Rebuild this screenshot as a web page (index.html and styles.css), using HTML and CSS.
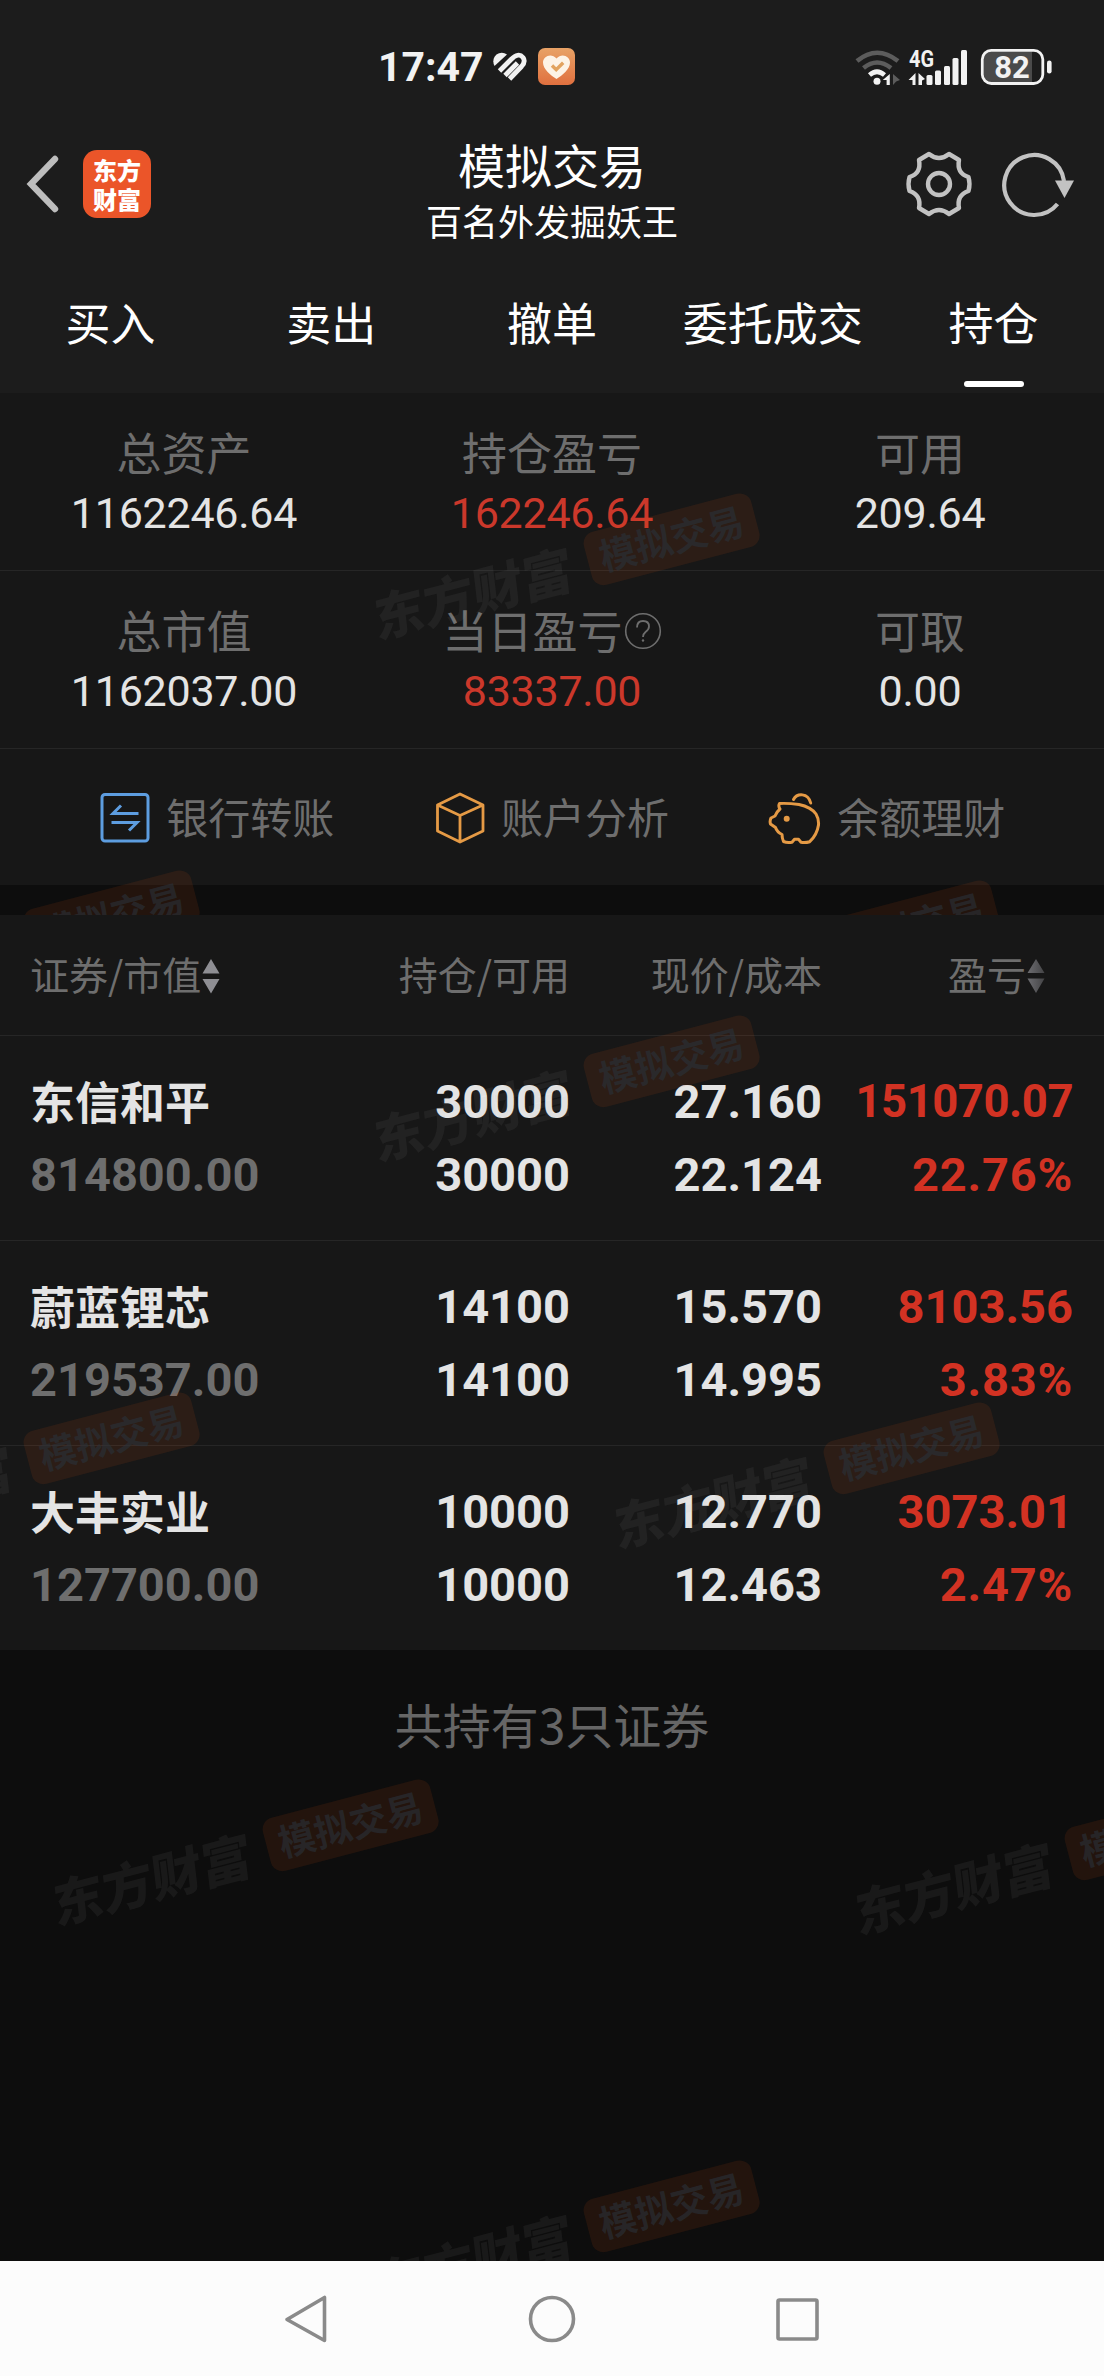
FILE: index.html
```html
<!DOCTYPE html>
<html lang="zh-CN">
<head>
<meta charset="utf-8">
<title>模拟交易</title>
<link rel="stylesheet" href="styles.css">
</head>
<body>
<div class="screen">
  <header class="top">
    <div class="status">
      <div class="status-left">
        <span class="clock">17:47</span>
        <svg class="health" width="34" height="30" viewBox="0 0 34 30">
          <g fill="none" stroke="#f2f2f2" stroke-width="4.800">
            <path d="M6.500 19 18 7.500Q25.500 0 30 5.500Q33 9.500 28.500 14.500L16.500 27"/>
            <path d="M12 23.500 24.500 11"/>
          </g>
          <path d="M1.500 14C-1 9 .5 3 6 1.200Q10.500 0 14 2.500Z" fill="#f2f2f2"/>
        </svg>
        <svg class="heart" width="38" height="38" viewBox="0 0 38 38">
          <defs><linearGradient id="hg" x1="0" y1="0" x2="0" y2="1"><stop offset="0" stop-color="#e8a266"/><stop offset="1" stop-color="#e0703f"/></linearGradient></defs>
          <rect width="37" height="37" rx="7" fill="url(#hg)"/>
          <path d="M18.500 31C13 27.500 5 21.500 5 14.500C5 8 13.500 4.500 18.500 10.500C23.500 4.500 32 8 32 14.500C32 21.500 24 27.500 18.500 31Z" fill="#fdf3e6"/>
          <path d="M14 17.500l4.200 4.200 7-7" fill="none" stroke="#e2a35f" stroke-width="3.400"/>
        </svg>
      </div>
      <svg class="status-right" width="200" height="40" viewBox="24 16 200 40">
        <g fill="none" stroke="#5c5c5c" stroke-width="4.600">
          <path d="M27 30Q47 13.500 68 30"/>
          <path d="M33.500 37Q47 26 61 37"/>
          <path d="M39.500 44Q47 37.500 54.500 44" stroke="#f2f2f2"/>
        </g>
        <circle cx="47" cy="50.300" r="3.500" fill="#f2f2f2"/>
        <path d="M59.800 43v11h-3.200v-5h-3.800z" fill="#f2f2f2"/>
        <path d="M63 43l7 6-3.800 1.500-3.200 3.500z" fill="#5c5c5c"/>
        <text class="net" x="79" y="36" textLength="25" lengthAdjust="spacingAndGlyphs">4G</text>
        <g fill="#f2f2f2">
          <path d="M85.500 42v12h-3v-5h-4zM88.500 42l6.500 6-3 1.500v4.500h-3.500z"/>
          <rect x="96.500" y="44" width="6" height="10" rx="1.500"/>
          <rect x="105" y="39.500" width="6" height="14.500" rx="1.500"/>
          <rect x="114" y="35" width="6" height="19" rx="1.500"/>
          <rect x="122.500" y="27" width="6" height="27" rx="1.500"/>
          <rect x="131" y="19" width="6" height="35" rx="1.500"/>
          <rect x="217" y="29.500" width="4.600" height="13" rx="2.300"/>
        </g>
        <path d="M162 20.500H202V52H162Q154 52 154 44V28Q154 20.500 162 20.500Z" fill="#4a4a4a"/>
        <rect x="152.300" y="19.300" width="60.500" height="33.200" rx="9" fill="none" stroke="#f2f2f2" stroke-width="2.800"/>
        <text class="bat" x="182" y="46.800" text-anchor="middle">82</text>
      </svg>
    </div>
    <div class="titlebar">
      <div class="title-left">
        <svg width="34" height="58" viewBox="0 0 34 58"><path d="M30 4 6 29 30 54" fill="none" stroke="#bdbdbd" stroke-width="6.400" stroke-linecap="round"/></svg>
        <div class="logo"><span>东方</span><span>财富</span></div>
      </div>
      <div class="titles">
        <h1>模拟交易</h1>
        <p>百名外发掘妖王</p>
      </div>
      <div class="title-right">
        <svg width="68" height="68" viewBox="0 0 68 68" fill="none" stroke="#c2c2c2" stroke-width="4.400" stroke-linejoin="round">
          <path d="M24 4Q34 12 44 4L54 10Q51.500 23.500 63.500 27Q65.500 34 63.500 41Q51.500 45 54 58L44 64Q34 56 24 64L14 58Q16.500 45 4.500 41Q2.500 34 4.500 27Q16.500 23.500 14 10Z"/>
          <circle cx="34" cy="34" r="11"/>
        </svg>
        <svg width="72" height="68" viewBox="0 0 72 68">
          <path d="M55.500 54A30 30 0 1 1 62 31" fill="none" stroke="#c2c2c2" stroke-width="4.200"/>
          <path d="M53 30.500H72L62.500 48Z" fill="#c2c2c2"/>
        </svg>
      </div>
    </div>
    <nav class="tabs">
      <a>买入</a><a>卖出</a><a>撤单</a><a>委托成交</a><a class="active">持仓</a>
    </nav>
  </header>

  <section class="overview">
    <div class="figures">
      <div class="figure"><span class="label">总资产</span><span class="num">1162246.64</span></div>
      <div class="figure"><span class="label">持仓盈亏</span><span class="num up">162246.64</span></div>
      <div class="figure"><span class="label">可用</span><span class="num">209.64</span></div>
    </div>
    <div class="figures">
      <div class="figure"><span class="label">总市值</span><span class="num">1162037.00</span></div>
      <div class="figure"><span class="label">当日盈亏<svg width="38" height="38" viewBox="0 0 38 38" fill="none" stroke="#6e6e6e"><circle cx="19" cy="19" r="17.300" stroke-width="1.600"/><path d="M13 15.500Q13 9 19 9Q25 9 25 14.500Q25 17.500 21.500 20Q19 22 19 25" stroke-width="1.800"/><circle cx="19" cy="28.500" r="1.200" fill="#6e6e6e" stroke="none"/></svg></span><span class="num up">83337.00</span></div>
      <div class="figure"><span class="label">可取</span><span class="num">0.00</span></div>
    </div>
    <div class="actions">
      <a>
        <svg width="50" height="52" viewBox="0 0 50 52" fill="none" stroke="#5d9de0" stroke-width="3"><rect x="2" y="2.500" width="46" height="46.500" rx="3"/><path d="M38.500 21.500H13L21 13.500M11.500 30.500H37L29 38.500"/></svg>
        银行转账
      </a>
      <a>
        <svg width="50" height="52" viewBox="0 0 50 52" fill="none" stroke="#e59a45" stroke-width="2.800" stroke-linejoin="round"><path d="M25 2 48 13V39L25 50 2.500 39V13ZM2.500 13 25 23.500 48 13M25 23.500V50"/></svg>
        账户分析
      </a>
      <a>
        <svg width="53" height="53" viewBox="0 0 53 53" fill="none" stroke="#e59a45" stroke-width="3" stroke-linejoin="round" stroke-linecap="round"><path d="M25.500 7.500C29 1 40 .5 42.700 11"/><path d="M11.500 11.500Q20 11 31 12.500Q43 15 48 22Q51 27 50.500 33Q49 43 41.700 49.700Q37 51 33 50.200L30.500 47.300H26.500L24 50.200Q19 51 15.500 49.500Q14 46 14 42.500Q9 40 7.500 35.500L2.500 32Q1.500 29 3 26L7 24Q8.500 20 12 17Q10 14 11.500 11.500Z"/><circle cx="18.700" cy="26.700" r="3" fill="#e59a45" stroke="none"/></svg>
        余额理财
      </a>
    </div>
    <div class="marks">
      <div class="mark m1"><b>东方财富</b><i>模拟交易</i></div>
      <div class="mark m2"><b>东方财富</b><i>模拟交易</i></div>
      <div class="mark m3"><b>东方财富</b><i>模拟交易</i></div>
    </div>
  </section>

  <section class="holdings">
    <div class="table">
      <div class="row head">
        <span>证券/市值<svg width="18" height="36" viewBox="0 0 18 36" fill="#8e8e93"><path d="M9 1 17.500 15.500H.5ZM.5 21H17.500L9 35.500Z"/></svg></span>
        <span>持仓/可用</span>
        <span>现价/成本</span>
        <span>盈亏<svg width="18" height="36" viewBox="0 0 18 36"><defs><linearGradient id="fade" x1="0" x2="1"><stop offset="0" stop-color="#6c6c70"/><stop offset="1" stop-color="#444446"/></linearGradient></defs><path d="M9 1 17.500 15H.5ZM.5 20.500H17.500L9 35Z" fill="url(#fade)"/></svg></span>
      </div>
      <div class="row">
        <div><strong>东信和平</strong><span class="dim">814800.00</span></div>
        <div><span>30000</span><span>30000</span></div>
        <div><span>27.160</span><span>22.124</span></div>
        <div class="gain"><span class="long">151070.07</span><span class="pct">22.76%</span></div>
      </div>
      <div class="row">
        <div><strong>蔚蓝锂芯</strong><span class="dim">219537.00</span></div>
        <div><span>14100</span><span>14100</span></div>
        <div><span>15.570</span><span>14.995</span></div>
        <div class="gain"><span>8103.56</span><span class="pct">3.83%</span></div>
      </div>
      <div class="row">
        <div><strong>大丰实业</strong><span class="dim">127700.00</span></div>
        <div><span>10000</span><span>10000</span></div>
        <div><span>12.770</span><span>12.463</span></div>
        <div class="gain"><span>3073.01</span><span class="pct">2.47%</span></div>
      </div>
    </div>
    <p class="count">共持有3只证券</p>
    <div class="marks">
      <div class="mark m1"><b>东方财富</b><i>模拟交易</i></div>
      <div class="mark m2"><b>东方财富</b><i>模拟交易</i></div>
      <div class="mark m3"><b>东方财富</b><i>模拟交易</i></div>
      <div class="mark m4"><b>东方财富</b><i>模拟交易</i></div>
      <div class="mark m5"><b>东方财富</b><i>模拟交易</i></div>
      <div class="mark m6"><b>东方财富</b><i>模拟交易</i></div>
    </div>
  </section>

  <footer class="sysnav">
    <svg width="50" height="50" viewBox="0 0 50 50"><path d="M42.500 3.500V46.500L5 25.500Z"/></svg>
    <svg width="50" height="50" viewBox="0 0 50 50"><circle cx="25" cy="25" r="21.500"/></svg>
    <svg width="50" height="50" viewBox="0 0 50 50"><rect x="6" y="6" width="39" height="39" rx="1.500"/></svg>
  </footer>
</div>
</body>
</html>
```

FILE: styles.css
```css
* { box-sizing: border-box; margin: 0; padding: 0; }

body {
  background: #0d0d0d;
  color: #e4e4e4;
  font-family: "Noto Sans CJK SC", sans-serif;
}

svg { display: block; flex: none; }

.screen {
  width: 1104px;
  height: 2376px;
  display: flex;
  flex-direction: column;
  overflow: hidden;
}

/* header */
.top { height: 393px; background: #1c1c1c; display: flex; flex-direction: column; }

.status {
  height: 132px;
  padding: 2px 50px 0 378px;
  display: flex;
  align-items: center;
  justify-content: space-between;
}
.status-left { display: flex; align-items: center; }
.clock {
  font: 700 41px/48px Roboto, sans-serif;
  color: #f2f2f2;
  width: 115px;
}
.heart { margin-left: 11px; }
.net { font: 700 23px Roboto, sans-serif; fill: #f2f2f2; }
.bat { font: 700 31px Roboto, sans-serif; fill: #f2f2f2; }

.titlebar {
  height: 106px;
  padding: 0 30px 0 25px;
  display: grid;
  grid-template-columns: 1fr auto 1fr;
  align-items: center;
}
.title-left { display: flex; align-items: center; gap: 24px; padding-bottom: 2px; }
.logo {
  width: 68px;
  height: 68px;
  border-radius: 14px;
  background: #eb5529;
  color: #fff;
  display: flex;
  flex-direction: column;
  justify-content: center;
  align-items: center;
  font: 900 24px/29px "Noto Sans CJK SC", sans-serif;
}
.titles { text-align: center; color: #fff; padding: 8px 0 0 5px; }
.titles h1 { font-size: 47px; font-weight: 400; line-height: 48px; }
.titles p { margin-top: 14px; font-size: 36px; line-height: 36px; }
.title-right { display: flex; justify-content: flex-end; gap: 29px; padding-bottom: 2px; }

.tabs { flex: 1; display: grid; grid-template-columns: repeat(5, 1fr); }
.tabs a {
  display: flex;
  flex-direction: column;
  align-items: center;
  justify-content: space-between;
  padding: 52px 0 6px;
  color: #fff;
  font-size: 45px;
  line-height: 64px;
}
.tabs .active::after {
  content: "";
  width: 60px;
  height: 6px;
  border-radius: 3px;
  background: #fff;
}

/* account overview */
.overview {
  position: relative;
  height: 522px;
  overflow: hidden;
}
.figures {
  height: 178px;
  background: #171717;
  border-bottom: 1px solid #262626;
  display: grid;
  grid-template-columns: repeat(3, 1fr);
}
.figure { display: flex; flex-direction: column; align-items: center; padding-top: 29px; }
.label {
  display: flex;
  align-items: center;
  color: #6e6e6e;
  font-size: 45px;
  line-height: 60px;
}
.label svg { margin: 1px 0 0 1px; }
.num { font: 400 43px/62px Roboto, sans-serif; letter-spacing: -0.25px; }
.up { color: #cb382b; }
.actions {
  height: 136px;
  padding: 0 50px;
  background: #171717;
  display: grid;
  grid-template-columns: repeat(3, 1fr);
}
.actions a {
  display: flex;
  align-items: center;
  justify-content: center;
  gap: 16px;
  padding-bottom: 2px;
  color: #6e6e6e;
  font-size: 42px;
  line-height: 60px;
}
.actions svg { margin-top: 4px; }

/* holdings */
.holdings { position: relative; height: 1346px; overflow: hidden; }
.table { background: #171717; }
.row {
  height: 205px;
  padding: 29px 31px 0 30px;
  display: grid;
  grid-template-columns: 271px 269px 252px 1fr;
  text-align: right;
  font: 700 47px/73px Roboto, sans-serif;
}
.row + .row { border-top: 1px solid #262626; }
.row > div { display: flex; flex-direction: column; align-items: flex-end; white-space: nowrap; }
.row > div:first-child { align-items: flex-start; }
.row strong { margin: -1px 0 1px; font: 700 45px/73px "Noto Sans CJK SC", sans-serif; }
.dim { color: #6e6e6e; }
.gain { color: #d23223; }
.long { font-size: 45.5px; letter-spacing: -0.5px; }
.pct { letter-spacing: 0.8px; }
.row.head {
  height: 120px;
  padding-top: 0;
  padding-bottom: 4px;
  align-items: center;
  color: #6e6e6e;
  font: 400 39px/60px "Noto Sans CJK SC", sans-serif;
}
.head span { display: flex; align-items: center; justify-content: flex-end; }
.head span:first-child { justify-content: flex-start; }
.head svg { margin: 5px 0 0 1px; }
.head span:last-child { padding-right: 28px; }
.count {
  padding-top: 37px;
  text-align: center;
  color: #666;
  font-size: 48px;
  line-height: 72px;
}

/* tiled watermark laid over the content */
.marks { position: absolute; inset: 0; pointer-events: none; }
.mark {
  position: absolute;
  left: 0;
  top: 0;
  width: 394px;
  height: 55px;
  margin: -27px 0 0 -307px;
  display: flex;
  align-items: center;
  justify-content: space-between;
  transform-origin: 307px 27px;
  transform: rotate(-14.7deg);
  white-space: nowrap;
}
.mark b {
  font-size: 51px;
  font-weight: 900;
  line-height: 55px;
  color: rgba(170, 170, 170, 0.075);
  transform: skewX(-8deg);
}
.mark i {
  width: 173px;
  height: 55px;
  border-radius: 12px;
  background: rgba(235, 90, 20, 0.1);
  color: rgba(42, 50, 58, 0.6);
  font-size: 37px;
  font-style: normal;
  font-weight: 700;
  line-height: 51px;
  text-align: center;
}
.m1 { left: 671px; top: 146px; }
.m2 { left: 111px; top: 523px; }
.m3 { left: 911px; top: 533px; }
.m4 { left: 350px; top: 910px; }
.m5 { left: 1152px; top: 919px; }
.m6 { left: 671px; top: 1291px; }

/* system navigation */
.sysnav {
  flex: 1;
  background: #fcfcfc;
  display: grid;
  grid-template-columns: repeat(3, 245px);
  justify-content: center;
  justify-items: center;
  align-items: center;
}
.sysnav path, .sysnav circle, .sysnav rect {
  fill: none;
  stroke: #8a8a8a;
  stroke-width: 3.6;
  stroke-linejoin: round;
}
```
